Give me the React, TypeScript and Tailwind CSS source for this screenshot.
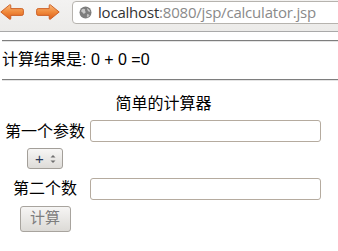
import React from "react"

const cjk = { fontFamily: '"Liberation Sans", "Noto Sans CJK SC", sans-serif' }

function Arrow({ flip = false }: { flip?: boolean }) {
  return (
    <svg width="24" height="16" viewBox="0 0 24 16" className={flip ? "-scale-x-100" : ""}>
      <defs>
        <linearGradient id={flip ? "gf" : "gb"} x1="0" y1="0" x2="0" y2="1">
          <stop offset="0" stopColor="#f9b77a" />
          <stop offset="0.5" stopColor="#f08a3c" />
          <stop offset="1" stopColor="#de5f1b" />
        </linearGradient>
      </defs>
      <path
        d="M0.8 8 L9.5 0.9 Q10.8 0.2 10.8 1.8 L10.8 4.6 L21.8 4.6 Q23.4 4.6 23.4 6.2 L23.4 9.8 Q23.4 11.4 21.8 11.4 L10.8 11.4 L10.8 14.2 Q10.8 15.8 9.5 15.1 Z"
        fill={`url(#${flip ? "gf" : "gb"})`}
        stroke="#c9581c"
        strokeWidth="0.9"
        strokeLinejoin="round"
      />
    </svg>
  )
}

function Globe() {
  return (
    <svg width="13" height="13" viewBox="0 0 13 13">
      <circle cx="6.5" cy="6.5" r="6" fill="#7d7d7d" />
      <path d="M3 3.2 Q5 2 6.2 3.5 Q5.5 5 6.8 6 Q6 8 4.2 7.6 Q3.5 6 2.2 5.6 Q2 4.2 3 3.2 Z" fill="#c8c8c8" />
      <path d="M8 2 Q10.5 3 11.4 5.5 Q10 6 9 5 Q8.2 4 8 2 Z" fill="#c8c8c8" />
      <path d="M8.2 8 Q10 7.8 10.6 9.6 Q9.5 11.2 8 11.4 Q7.6 9.6 8.2 8 Z" fill="#bdbdbd" />
    </svg>
  )
}

export default function App() {
  return (
    <div className="w-[338px] h-[251px] overflow-hidden bg-white text-black" style={cjk}>
      {/* browser toolbar */}
      <div className="h-[32px] flex items-start bg-gradient-to-b from-[#f3f2f1] to-[#ecebe9] border-b border-[#a9a9a9]">
        <div className="flex items-center gap-[12px] pt-[4px]">
          <Arrow />
          <Arrow flip />
        </div>
        <div className="ml-[12px] mt-[1px] h-[23px] w-[280px] flex items-center rounded-[4px] border border-[#b6b3ae] bg-white pl-[6px] shrink-0">
          <Globe />
          <span className="ml-[6px] text-[15px] tracking-[-0.2px] leading-none" style={{ fontFamily: '"Open Sans", "DejaVu Sans", sans-serif' }}>
            <span className="text-[#333]">localhost</span>
            <span className="text-[#8a8a8a]">:8080/jsp/calculator.jsp</span>
          </span>
        </div>
      </div>

      {/* page */}
      <div className="pl-[2px]">
        <div className="mt-[8px] h-[2px] border-t border-[#7e7e7e] border-b border-b-[#e4e4e4]" />
        <div className="h-[37px] flex items-center text-[16px] pb-[1px]">计算结果是: 0 + 0 =0</div>
        <div className="h-[2px] border-t border-[#7e7e7e] border-b border-b-[#e4e4e4]" />

        <div className="w-[323px] mt-[8px]">
          <div className="h-[29px] flex items-center justify-center text-[16px]">简单的计算器</div>
          <div className="grid grid-cols-[86px_1fr] grid-rows-[25px_31px_29px_31px] text-[16px]">
            <div className="flex items-center justify-center pt-[3px]">第一个参数</div>
            <div className="flex items-center pl-[2px]">
              <div className="h-[22px] w-[231px] rounded-[3px] border border-[#b5ab9f] bg-white" />
            </div>

            <div className="flex items-center justify-center">
              <div className="h-[21px] w-[36px] flex items-center justify-between rounded-[3px] border border-[#a39f99] bg-gradient-to-b from-[#f7f6f5] to-[#dedcd8] pl-[7px] pr-[6px]">
                <span className="text-[15px] leading-none text-[#2a3a5a]">+</span>
                <svg width="6" height="10" viewBox="0 0 6 10">
                  <path d="M0.5 3.5 L3 1 L5.5 3.5 Z" fill="#6f6f6f" />
                  <path d="M0.5 6.5 L3 9 L5.5 6.5 Z" fill="#6f6f6f" />
                </svg>
              </div>
            </div>
            <div />

            <div className="flex items-center justify-center">第二个数</div>
            <div className="flex items-center pl-[2px]">
              <div className="h-[22px] w-[231px] rounded-[3px] border border-[#b5ab9f] bg-white" />
            </div>

            <div className="flex items-center justify-center">
              <div className="h-[26px] w-[51px] flex items-center justify-center rounded-[3px] border border-[#a8a49e] bg-gradient-to-b from-[#f6f5f4] to-[#dcdad6] text-[15px] text-[#7e7e7e]">
                计算
              </div>
            </div>
            <div />
          </div>
        </div>
      </div>
    </div>
  )
}
